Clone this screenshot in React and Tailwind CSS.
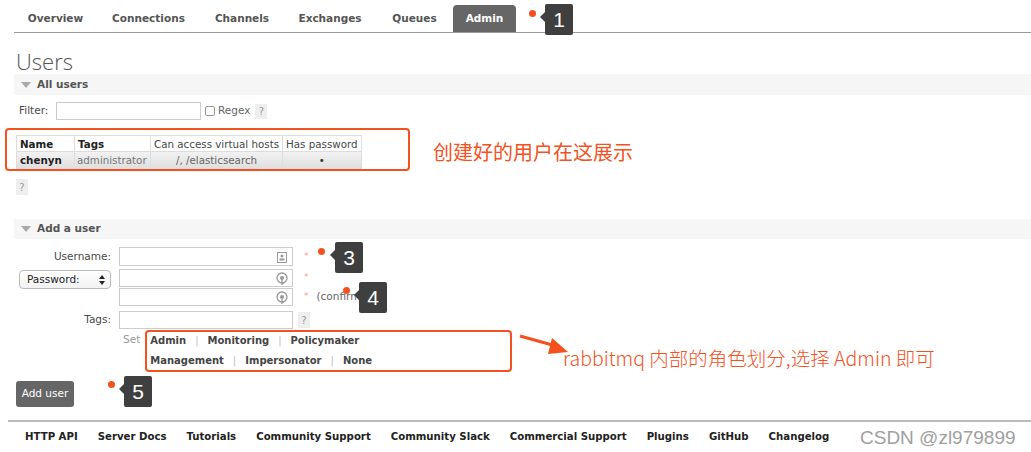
import React from "react";

const Marker = ({ n, dotX, dotY, boxX, boxY }) => (
  <>
    <div className="absolute w-[7px] h-[7px] rounded-full bg-[#f4511e]" style={{ left: dotX, top: dotY }} />
    <div className="absolute w-[28px] h-[31px] bg-[#3f3f3f] rounded-[2px] flex items-center justify-center text-white text-[21px] font-['Liberation_Sans',sans-serif]" style={{ left: boxX, top: boxY }}>
      <div className="absolute left-[-5px] top-[8px] w-0 h-0 border-y-[5px] border-y-transparent border-r-[5px] border-r-[#3f3f3f]" />
      {n}
    </div>
  </>
);

const Help = ({ className = "" }) => (
  <div className={"w-[12px] h-[15px] bg-[#eeeeee] text-[#999] text-[10px] flex items-center justify-center " + className}>?</div>
);

const CardIcon = () => (
  <svg width="10" height="11" viewBox="0 0 10 11" className="absolute right-[5px] top-[4px]">
    <rect x="0.5" y="0.5" width="9" height="10" fill="none" stroke="#999" />
    <circle cx="5" cy="4" r="1.5" fill="#999" />
    <rect x="2.5" y="6.5" width="5" height="2" fill="#999" />
  </svg>
);

const KeyIcon = () => (
  <svg width="12" height="14" viewBox="0 0 12 14" className="absolute right-[4px] top-[2px]">
    <circle cx="6" cy="6" r="5" fill="none" stroke="#999" strokeWidth="1.3" />
    <circle cx="6" cy="6" r="2" fill="#999" />
    <path d="M6 8 V13 M6 11 H8" stroke="#999" strokeWidth="1.3" />
  </svg>
);

const Field = ({ icon }) => (
  <div className="relative w-[174px] h-[19px] border border-[#ccc] bg-white">{icon}</div>
);

export default function App() {
  const tabs = [
    ["Overview", 83],
    ["Connections", 103],
    ["Channels", 84],
    ["Exchanges", 92],
    ["Queues", 77],
  ];
  const footer = ["HTTP API", "Server Docs", "Tutorials", "Community Support", "Community Slack", "Commercial Support", "Plugins", "GitHub", "Changelog"];
  return (
    <div className="relative w-[1031px] h-[452px] bg-white overflow-hidden text-[#484848] font-['DejaVu_Sans',sans-serif] text-[10.5px]">
      {/* nav */}
      <div className="ml-[14px] mt-[5px] h-[28px] border-b border-[#9a9a9a] flex items-end">
        {tabs.map(([t, w]) => (
          <div key={t} className="h-[27px] pt-[1px] flex items-center justify-center font-bold text-[10.5px] text-[#555]" style={{ width: w }}>{t}</div>
        ))}
        <div className="w-[63px] h-[27px] pt-[1px] bg-[#666] rounded-t-[4px] flex items-center justify-center font-bold text-white text-[10.5px]">Admin</div>
      </div>

      <div className="ml-[16px] mt-[16px] text-[22px] leading-[25px] text-[#555] font-['Open_Sans',sans-serif] font-light">Users</div>

      <div className="ml-[14px] h-[21px] bg-[#f6f6f6] flex items-center">
        <svg width="10" height="6" viewBox="0 0 10 6" className="ml-[7px]"><path d="M0 0 H10 L5 6 Z" fill="#aaa" /></svg>
        <span className="ml-[6px] font-bold text-[#555]">All users</span>
      </div>

      <div className="ml-[19px] mt-[7px] h-[18px] flex items-center">
        <span className="w-[37px]">Filter:</span>
        <div className="w-[145px] h-[18px] border border-[#ccc]" />
        <div className="ml-[4px] w-[10px] h-[10px] border border-[#999] rounded-[2px]" />
        <span className="ml-[3px] text-[#666]">Regex</span>
        <Help className="ml-[5px]" />
      </div>

      {/* table */}
      <table className="ml-[16px] mt-[15px] border-collapse text-[10.3px]">
        <thead>
          <tr className="h-[16px] leading-[14px]">
            <th className="w-[58px] border border-[#ddd] text-left font-bold text-[#222] px-[3px]">Name</th>
            <th className="w-[76px] border border-[#ddd] text-left font-bold text-[#222] px-[3px]">Tags</th>
            <th className="w-[132px] border border-[#ddd] font-normal px-[3px] whitespace-nowrap">Can access virtual hosts</th>
            <th className="w-[78px] border border-[#ddd] font-normal px-[3px] whitespace-nowrap">Has password</th>
          </tr>
        </thead>
        <tbody>
          <tr className="h-[17px] leading-[14px] bg-gradient-to-b from-[#f2f2f2] to-[#dedede]">
            <td className="border border-[#ddd] font-bold text-[#222] px-[3px]">chenyn</td>
            <td className="border border-[#ddd] text-[#777] px-[2px]">administrator</td>
            <td className="border border-[#ddd] text-[#666] text-center">/, /elasticsearch</td>
            <td className="border border-[#ddd] text-center text-[#333]">•</td>
          </tr>
        </tbody>
      </table>

      <Help className="ml-[16px] mt-[10px] h-[16px]" />

      <div className="ml-[14px] mt-[24px] h-[20px] bg-[#f6f6f6] flex items-center">
        <svg width="10" height="6" viewBox="0 0 10 6" className="ml-[7px]"><path d="M0 0 H10 L5 6 Z" fill="#aaa" /></svg>
        <span className="ml-[6px] font-bold text-[#555]">Add a user</span>
      </div>

      {/* form */}
      <div className="mt-[8px] flex flex-col">
        <div className="flex items-center h-[19px]">
          <span className="w-[111px] text-right">Username:</span>
          <div className="ml-[8px]"><Field icon={<CardIcon />} /></div>
          <span className="ml-[11px] text-[#f99] text-[9px]">*</span>
        </div>
        <div className="flex mt-[3px]">
          <div className="ml-[19px] w-[92px] h-[19px] mt-[1px] border border-[#bbb] rounded-[4px] bg-gradient-to-b from-white to-[#f2f2f2] flex items-center px-[7px] text-[#222] relative">
            Password:
            <svg width="6" height="10" viewBox="0 0 6 10" className="absolute right-[5px] top-[4px]"><path d="M3 0 L6 4 H0 Z M0 6 H6 L3 10 Z" fill="#222" /></svg>
          </div>
          <div className="ml-[8px] flex flex-col gap-[1px]">
            <div className="flex items-center">
              <div className="relative w-[174px] h-[18px] border border-[#ccc]"><KeyIcon /></div>
              <span className="ml-[11px] text-[#f99] text-[9px]">*</span>
            </div>
            <div className="flex items-center">
              <div className="relative w-[174px] h-[18px] border border-[#ccc]"><KeyIcon /></div>
              <span className="ml-[11px] text-[#f99] text-[9px]">*</span>
              <span className="ml-[8px] text-[#666]">(confirm)</span>
            </div>
          </div>
        </div>
        <div className="flex items-center mt-[5px] h-[18px]">
          <span className="w-[111px] text-right">Tags:</span>
          <div className="ml-[8px] w-[174px] h-[18px] border border-[#ccc]" />
          <Help className="ml-[5px] h-[16px]" />
        </div>
        <div className="flex mt-[3px]">
          <span className="ml-[123px] text-[#999]">Set</span>
          <div className="ml-[10px] flex flex-col gap-[6px] mt-[2px] font-bold text-[10px] text-[#444] leading-[14px]">
            <div className="flex items-center">
              <span>Admin</span><span className="mx-[9px] font-normal text-[#bbb]">|</span>
              <span>Monitoring</span><span className="mx-[9px] font-normal text-[#bbb]">|</span>
              <span>Policymaker</span>
            </div>
            <div className="flex items-center">
              <span>Management</span><span className="mx-[9px] font-normal text-[#bbb]">|</span>
              <span>Impersonator</span><span className="mx-[9px] font-normal text-[#bbb]">|</span>
              <span>None</span>
            </div>
          </div>
        </div>
        <div className="ml-[16px] mt-[13px] w-[58px] h-[26px] bg-[#666] rounded-[3px] text-white flex items-center justify-center">Add user</div>
      </div>

      {/* footer */}
      <div className="absolute left-[8px] right-0 top-[420px] h-[2px] bg-[#bbb]" />
      <div className="absolute left-[25px] top-[429px] flex items-center gap-[20px] font-['DejaVu_Sans_Condensed','DejaVu_Sans',sans-serif] font-bold text-[11.3px] text-[#222] leading-[16px]">
        {footer.map((f) => <span key={f}>{f}</span>)}
      </div>
      <div className="absolute left-[860px] top-[424px] text-[19px] text-[#a0a0a0] font-['Liberation_Sans',sans-serif] font-light">CSDN @zl979899</div>

      {/* annotations */}
      <div className="absolute left-[5px] top-[128px] w-[405px] h-[43px] border-2 border-[#f4511e] rounded-[4px]" />
      <div className="absolute left-[433px] top-[139px] text-[20px] text-[#f4511e] font-['Noto_Sans_CJK_SC',sans-serif] leading-[26px]">创建好的用户在这展示</div>
      <div className="absolute left-[145px] top-[330px] w-[367px] h-[42px] border-2 border-[#f4511e] rounded-[4px]" />
      <svg className="absolute left-[518px] top-[332px]" width="52" height="26" viewBox="0 0 52 26">
        <path d="M2 4 L38 14" stroke="#f4511e" strokeWidth="3" />
        <path d="M34 6 L50 20 L30 22 Z" fill="#f4511e" />
      </svg>
      <div className="absolute left-[563px] top-[345px] text-[19.5px] text-[#f4511e] font-['Noto_Sans_CJK_SC',sans-serif] font-light leading-[26px] whitespace-nowrap">rabbitmq 内部的角色划分,选择 Admin 即可</div>

      <Marker n="1" dotX={529} dotY={10} boxX={545} boxY={4} />
      <Marker n="3" dotX={318} dotY={248} boxX={335} boxY={242} />
      <Marker n="4" dotX={343} dotY={287} boxX={359} boxY={282} />
      <Marker n="5" dotX={108} dotY={381} boxX={124} boxY={376} />
    </div>
  );
}
